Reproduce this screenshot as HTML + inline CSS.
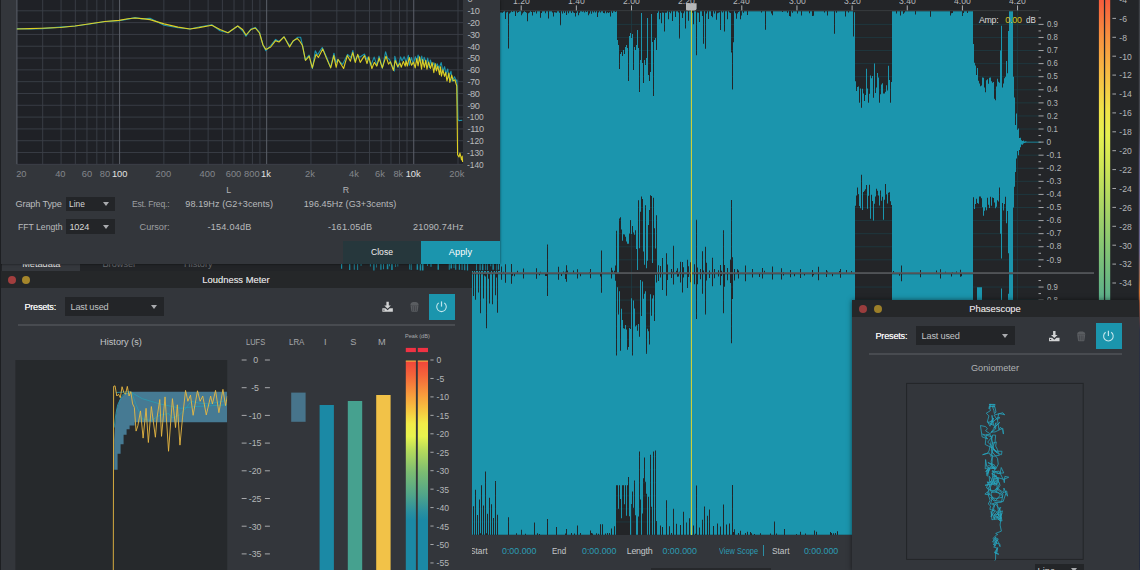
<!DOCTYPE html>
<html lang="en">
<head>
<meta charset="utf-8">
<title>Acoustica – Analysis</title>
<style>
html,body{margin:0;padding:0;overflow:hidden;}
body{width:1140px;height:570px;overflow:hidden;background:#232528;position:relative;
 font-family:"Liberation Sans",sans-serif;font-size:9.2px;color:#c4c6c8;}
.abs{position:absolute;}
.t{position:absolute;white-space:nowrap;line-height:12px;}
svg{position:absolute;left:0;top:0;overflow:hidden;}
.win{position:absolute;background:#33363b;overflow:hidden;}
.titlebar{position:absolute;left:0;right:0;top:0;background:#252729;}
.dot{position:absolute;border-radius:50%;}
.dd{position:absolute;background:#232528;}
.arrow{position:absolute;width:0;height:0;border-left:3.7px solid transparent;border-right:3.7px solid transparent;border-top:4.3px solid #a9abae;}
.btn{position:absolute;}
</style>
</head>
<body>

<div id="waveview" class="abs" style="left:0;top:0;width:1140px;height:570px;">
<svg width="1140" height="570" viewBox="0 0 1140 570">
<rect x="0" y="0" width="1140" height="570" fill="#232528"/>
<path d="M471,259.82H1039M471,246.74H1039M471,233.66H1039M471,220.58H1039M471,207.5H1039M471,194.42H1039M471,181.34H1039M471,168.26H1039M471,155.18H1039M471,142.1H1039M471,129.02H1039M471,115.94H1039M471,102.86H1039M471,89.78H1039M471,76.7H1039M471,63.62H1039M471,50.54H1039M471,37.46H1039M471,24.38H1039M471,521.95H1039M471,508.9H1039M471,495.85H1039M471,482.8H1039M471,469.75H1039M471,456.7H1039M471,443.65H1039M471,430.6H1039M471,417.55H1039M471,404.5H1039M471,391.45H1039M471,378.4H1039M471,365.35H1039M471,352.3H1039M471,339.25H1039M471,326.2H1039M471,313.15H1039M471,300.1H1039M471,287.05H1039M521.2,11V535M576.35,11V535M631.5,11V535M686.65,11V535M741.8,11V535M796.95,11V535M852.1,11V535M907.25,11V535M962.4,11V535M1017.55,11V535" stroke="#1d3b43" stroke-width="0.8" fill="none"/>
<path d="M471,11.3V11.3H472V12.46H473V15.63H474V12.83H475V11.3H476V11.3H477V12.17H478V14.08H479V12.34H480V11.3H481V11.3H482V12.87H483V11.3H484V11.3H485V11.3H486V11.3H487V13.11H488V11.3H489V11.3H490V11.3H491V11.3H492V12.02H493V12.77H494V11.3H495V11.3H496V11.3H497V11.3H498V11.3H499V13.26H500V12.46H501V12.57H502V12.76H503V11.8H504V11.3H505V18.95H506V12.42H507V11.85H508V48.43H509V13.45H510V12.41H511V11.3H512V11.92H513V11.3H514V11.3H515V16.04H516V11.3H517V12.7H518V12.1H519V11.3H520V11.3H521V15.24H522V13.52H523V12.34H524V11.3H525V11.92H526V12.66H527V21.24H528V13.35H529V12.6H530V11.3H531V12H532V15.58H533V11.86H534V12.2H535V11.3H536V13.4H537V11.3H538V11.3H539V11.3H540V17.75H541V13.01H542V11.3H543V11.3H544V11.3H545V13.16H546V11.3H547V11.3H548V18.5H549V11.3H550V11.3H551V11.3H552V12.62H553V16.4H554V12.15H555V12.38H556V12.66H557V11.3H558V11.3H559V12.78H560V25.36H561V11.3H562V13.52H563V11.3H564V12.92H565V11.3H566V15.12H567V11.3H568V13.27H569V11.3H570V11.3H571V13.03H572V11.3H573V12.48H574V12.99H575V16.39H576V12.94H577V11.3H578V15.29H579V12.69H580V11.3H581V11.3H582V11.83H583V11.3H584V12.52H585V11.3H586V11.88H587V11.3H588V15.24H589V13.46H590V11.3H591V13.83H592V11.3H593V12.45H594V11.3H595V12.54H596V11.3H597V16.97H598V12.6H599V11.3H600V12.41H601V11.3H602V11.3H603V13.12H604V13.32H605V11.3H606V13.14H607V12.26H608V13.11H609V12.19H610V16.52H611V11.3H612V13.03H613V11.3H614V11.3H615V11.9H616V11.2H617V40H618V45H619V69H620V54H621V52H622V56H623V50H624V54H625V47H626V45H627V48H628V81H629V36H630V33H631V38H632V34H633V70H634V47H635V50H636V45H637V30H638V48H639V92H640V60H641V13H642V63H643V83H644V60H645V65H646V58H647V18H648V75H649V81H650V72H651V14H652V42H653V96H654V40H655V38H656V50H657V13.1H658V11.3H659V19.2H660V12.88H661V23.14H662V12.48H663V12.84H664V31.44H665V12.7H666V12.83H667V11.3H668V19.22H669V11.84H670V13.2H671V11.3H672V21.04H673V11.3H674V11.3H675V16.99H676V11.3H677V11.3H678V12.47H679V38.53H680V11.3H681V12.79H682V17.99H683V13.21H684V11.3H685V28.44H686V11.3H687V11.3H688V20.66H689V11.3H690V11.3H691V11.3H692V12.83H693V24.13H694V11.3H695V11.3H696V55.18H697V12.44H698V12.77H699V21.89H700V11.3H701V11.3H702V15.9H703V43.69H704V11.3H705V48.78H706V13.38H707V11.3H708V18.93H709V11.3H710V11.3H711V15.94H712V17.23H713V11.3H714V13.56H715V11.3H716V19.74H717V13.26H718V12.85H719V12.18H720V30.05H721V11.3H722V12.61H723V11.3H724V31.44H725V11.3H726V11.3H727V19.25H728V11.3H729V12.4H730V13H731V52.46H732V89.46H733V42.25H734V11.3H735V13.25H736V18.82H737V13.58H738V12.12H739V11.3H740V19.28H741V15.61H742V11.3H743V12.66H744V11.3H745V11.3H746V11.3H747V15.07H748V11.3H749V11.3H750V11.3H751V11.3H752V11.3H753V11.3H754V11.3H755V11.3H756V11.3H757V11.3H758V11.3H759V11.3H760V11.3H761V12.55H762V11.3H763V11.3H764V11.3H765V29.73H766V11.3H767V11.3H768V11.3H769V11.3H770V11.3H771V13.58H772V15.2H773V11.3H774V11.3H775V11.3H776V11.3H777V11.3H778V11.3H779V11.3H780V11.3H781V11.3H782V12.1H783V11.3H784V11.3H785V11.3H786V11.3H787V12.69H788V11.3H789V15.97H790V16.41H791V11.3H792V12.75H793V11.3H794V11.3H795V11.3H796V11.3H797V13.48H798V11.3H799V11.3H800V11.3H801V15.4H802V11.3H803V11.3H804V11.3H805V11.3H806V11.3H807V11.3H808V11.3H809V13.32H810V11.3H811V11.3H812V15.9H813V15.77H814V11.3H815V11.3H816V11.3H817V11.3H818V11.3H819V11.3H820V11.3H821V11.3H822V11.3H823V11.3H824V12.5H825V11.3H826V11.3H827V15.43H828V11.3H829V11.3H830V11.3H831V11.3H832V11.3H833V11.3H834V33.67H835V11.3H836V12.85H837V11.3H838V11.3H839V11.3H840V11.3H841V11.3H842V11.3H843V11.3H844V11.3H845V16.45H846V11.3H847V11.3H848V12.52H849V11.3H850V11.3H851V11.3H852V11.3H853V36.46H854V12.13H855V81.19H856V91H857V87.06H858V86.53H859V102.86H860V88.6H861V107.69H862V88.75H863V93.47H864V100.93H865V94.91H866V68.8H867V88.62H868V102.86H869V93.7H870V75.48H871V78.34H872V75.96H873V97.66H874V63.62H875V93.11H876V87.48H877V73.05H878V77.5H879V102.86H880V94.28H881V84.42H882V83.13H883V93.4H884V93.39H885V91.75H886V85.2H887V90.42H888V65.73H889V80.07H890V102.86H891V82.08H892V11.3H893V11.3H894V11.3H895V11.3H896V13.57H897V11.3H898V11.3H899V11.3H900V15.58H901V11.3H902V11.3H903V13.8H904V12.5H905V11.3H906V11.3H907V11.3H908V11.3H909V11.3H910V11.3H911V11.3H912V11.3H913V11.3H914V11.3H915V14.39H916V11.3H917V11.3H918V11.3H919V11.3H920V11.3H921V11.3H922V11.3H923V11.3H924V11.3H925V11.3H926V11.3H927V11.3H928V11.3H929V11.3H930V16.69H931V11.3H932V11.3H933V11.3H934V11.3H935V11.3H936V11.3H937V11.3H938V11.3H939V11.3H940V11.3H941V11.3H942V11.3H943V11.3H944V11.3H945V11.3H946V11.3H947V11.3H948V11.3H949V11.3H950V15.59H951V13.18H952V13.06H953V11.3H954V11.3H955V11.3H956V11.3H957V11.3H958V11.3H959V11.3H960V11.3H961V11.3H962V15.92H963V12.96H964V11.3H965V11.3H966V11.3H967V12.93H968V11.3H969V11.3H970V11.3H971V11.3H972V11.3H973V43.94H974V62.82H975V65.38H976V75.01H977V67.95H978V80.84H979V83.49H980V86.32H981V85.42H982V77.49H983V77.72H984V87.49H985V92.24H986V80.2H987V79.33H988V83.86H989V77.65H990V77.47H991V81.27H992V82.65H993V81.91H994V98.86H995V100.3H996V86.56H997V78.72H998V81.78H999V82.83H1000V50.54H1001V25.69H1002V87.62H1003V83.38H1004V78.13H1005V76.77H1006V61H1007V73.33H1008V30.92H1009V11.3H1010V11.3H1011V11.3H1012V11.3H1013V76.65H1014V97.55H1015V125.07H1016V113.56H1017V129.79H1018V128.47H1019V138.09H1020V137.86H1021V140.26H1022V140.9H1023V140.4H1024V141.38H1025V141.18H1026V141.58H1027V141.71H1028V141.71H1029V141.71H1030V141.71H1031V141.71H1032V141.71H1033V141.71H1034V141.71H1035V141.71H1036V141.71H1037V141.71H1038V141.71H1039V141.71H1040V141.71H1041V142.49H1040V142.49H1039V142.49H1038V142.49H1037V142.49H1036V142.49H1035V142.49H1034V142.49H1033V142.49H1032V142.49H1031V142.49H1030V142.49H1029V142.49H1028V142.49H1027V142.55H1026V142.75H1025V143.04H1024V143.58H1023V144.73H1022V144.39H1021V147.29H1020V150.07H1019V155.32H1018V150.94H1017V158.53H1016V172H1015V186.65H1014V207.55H1013V272.9H1012V272.9H1011V272.9H1010V272.9H1009V253.28H1008V211.1H1007V223.2H1006V196.75H1005V203.9H1004V210.49H1003V202.94H1002V258.51H1001V233.66H1000V187.55H999V201.52H998V200.23H997V206.68H996V208.19H995V202.53H994V198.06H993V197.44H992V205.79H991V196.66H990V208.04H989V204.86H988V197.71H987V210.34H986V207.3H985V210.73H984V215.84H983V207.23H982V198.14H981V196.38H980V196.59H979V203.78H978V202.91H977V198.76H976V203.89H975V208.91H974V197.19H973V272.9H972V272.9H971V272.9H970V272.9H969V272.9H968V272.9H967V272.9H966V272.9H965V272.9H964V272.9H963V272.9H962V272.9H961V269.77H960V272.9H959V272.9H958V272.9H957V271.52H956V272.9H955V272.9H954V272.9H953V271.95H952V272.9H951V272.9H950V272.9H949V272.9H948V272.9H947V272.9H946V271.87H945V272.9H944V272.9H943V272.9H942V272.9H941V269.15H940V272.9H939V272.9H938V272.9H937V270.56H936V272.9H935V272.9H934V272.9H933V272.9H932V272.9H931V272.9H930V272.9H929V272.9H928V272.9H927V272.9H926V272.9H925V272.9H924V272.9H923V272.9H922V272.9H921V270H920V272.9H919V272.9H918V272.9H917V272.9H916V272.9H915V272.9H914V272.9H913V272.9H912V272.9H911V272.9H910V272.9H909V272.9H908V272.9H907V272.9H906V272.9H905V272.9H904V272.9H903V272.9H902V265.51H901V272.9H900V272.9H899V272.9H898V272.9H897V272.9H896V272.9H895V272.9H894V271.04H893V272.9H892V204.89H891V201.16H890V192.22H889V192.77H888V203.61H887V194.14H886V183.9H885V199.79H884V219.8H883V196.74H882V200.75H881V190.61H880V205.61H879V195.45H878V190.86H877V188.87H876V196.55H875V203.67H874V220.58H873V201.08H872V194.74H871V218.78H870V184.86H869V195.7H868V208.76H867V184.88H866V189.37H865V190.85H864V191.91H863V210.07H862V174.8H861V208.29H860V205.9H859V194.03H858V187.41H857V195.44H856V205.76H855V272.9H854V272.9H853V272.9H852V270.9H851V272.9H850V272.9H849V272.9H848V272.9H847V269.99H846V272.9H845V272.9H844V272.9H843V272.9H842V272.9H841V269.02H840V271.11H839V272.9H838V272.9H837V272.9H836V272.9H835V272.9H834V272.9H833V272.9H832V272.9H831V272.9H830V272.9H829V272.9H828V271.43H827V270.07H826V272.9H825V272.9H824V272.9H823V272.9H822V272.9H821V272.9H820V272.9H819V266.63H818V272.9H817V272.9H816V272.9H815V272.9H814V272.9H813V269.96H812V272.9H811V272.9H810V272.9H809V272.9H808V272.9H807V272.9H806V272.9H805V272.9H804V272.9H803V272.9H802V272.9H801V268.96H800V272.9H799V272.9H798V272.9H797V272.9H796V272.9H795V272.9H794V272.9H793V272.9H792V272.9H791V269.95H790V272.9H789V272.9H788V272.9H787V272.9H786V272.9H785V272.9H784V272.03H783V272.9H782V268.29H781V272.9H780V272.9H779V272.9H778V272.9H777V272.9H776V272.9H775V272.9H774V272.9H773V266.59H772V272.9H771V272.9H770V272.9H769V272.9H768V272.9H767V272.9H766V272.9H765V270.8H764V272.9H763V267.96H762V272.9H761V272.9H760V272.9H759V272.9H758V272.9H757V272.9H756V272.9H755V272.9H754V272.9H753V269.05H752V272.9H751V272.9H750V272.9H749V272.9H748V272.9H747V272.9H746V265.46H745V272.9H744V272.9H743V272.9H742V272.9H741V272.9H740V272.9H739V270.61H738V269.23H737V272.9H736V272.9H735V268.89H734V272.9H733V257.36H732V200.01H731V259.58H730V272.9H729V272.9H728V267.98H727V272.9H726V272.9H725V265.1H724V230.16H723V272.9H722V270.83H721V265.07H720V272.9H719V270.31H718V272.9H717V272.9H716V272.9H715V269.03H714V272.9H713V257.75H712V272.9H711V272.9H710V270.43H709V272.9H708V272.9H707V262.68H706V246.74H705V272.9H704V270.51H703V251.24H702V272.9H701V269.06H700V272.9H699V272.9H698V267.39H697V219.81H696V272.9H695V264.29H694V272.9H693V272.9H692V242.12H691V262.15H690V272.9H689V266.24H688V259.8H687V272.9H686V272.9H685V272.9H684V267.21H683V261.97H682V272.9H681V261.75H680V271.83H679V272.9H678V268.26H677V270.7H676V272.9H675V272.9H674V245.87H673V271.66H672V268.91H671V272.9H670V272.9H669V272.9H668V264.57H667V253.19H666V272.9H665V272.9H664V272.9H663V258.02H662V272.9H661V266.01H660V272.9H659V265.3H658V272.9H657V215.2H656V248.39H655V228.27H654V197.78H653V263.02H652V196.09H651V195.15H650V209.88H649V225.06H648V260.75H647V268.13H646V205.15H645V264.79H644V251.59H643V198.95H642V196.56H641V211.86H640V248.15H639V200.2H638V269.88H637V248.94H636V230.32H635V234.73H634V232.58H633V225.97H632V234.07H631V220.01H630V233.39H629V243.78H628V243.77H627V241.62H626V236.74H625V234.47H624V234.19H623V240.78H622V229.45H621V217.19H620V218.55H619V272.9H618V272.9H617V230.87H616V265.57H615V270.67H614V272.9H613V270.52H612V267.72H611V272.9H610V272.9H609V272.9H608V272.9H607V272.9H606V272.9H605V272.9H604V272.9H603V272.9H602V250.6H601V272.9H600V272.9H599V272.9H598V272.9H597V272.9H596V272.9H595V272.9H594V272.9H593V272.9H592V272.9H591V268.92H590V272.09H589V272.9H588V272.9H587V272.9H586V272.9H585V272.9H584V272.9H583V272.9H582V272.9H581V272.9H580V272.9H579V272.9H578V269.14H577V272.9H576V272.9H575V272.9H574V270.55H573V272.9H572V272.9H571V272.9H570V272.9H569V272.9H568V270.58H567V265.33H566V271.78H565V272.9H564V271.55H563V272.9H562V272.9H561V272.9H560V272.9H559V266.63H558V272.9H557V272.9H556V272.9H555V272.9H554V272.9H553V272.9H552V272.9H551V272.9H550V272.9H549V272.9H548V244.46H547V272.9H546V272.9H545V272.9H544V272.9H543V272.9H542V272.9H541V271.64H540V272.9H539V272.9H538V272.9H537V268.2H536V272.9H535V272.9H534V272.9H533V272.9H532V272.9H531V272.9H530V272.9H529V272.9H528V272.9H527V272.9H526V272.9H525V272.9H524V268.62H523V272.9H522V272.9H521V272.9H520V272.9H519V272.9H518V270.66H517V272.9H516V272.9H515V272.9H514V272.9H513V272.9H512V264.03H511V272.9H510V272.9H509V272.9H508V272.9H507V272.9H506V264.33H505V272.9H504V271.75H503V272.9H502V266.54H501V272.9H500V272.9H499V272.9H498V234.08H497V272.9H496V248.86H495V272.9H494V271.21H493V236.29H492V272.9H491V270.73H490V246.72H489V272.9H488V272.9H487V213.32H486V272.9H485V272.9H484V243.07H483V272.9H482V272.9H481V234.51H480V272.9H479V254.43H478V272.9H477V272.9H476V244.23H475V272.9H474V252.07H473V272.9H472V272.9H471Z M471,274.2V274.2H472V274.2H473V295.91H474V274.2H475V299.73H476V274.2H477V274.2H478V292.38H479V274.2H480V313.23H481V274.2H482V274.2H483V298.52H484V275.43H485V276.53H486V328.27H487V274.2H488V278.65H489V303.42H490V274.2H491V274.2H492V304.23H493V274.2H494V274.2H495V295.2H496V277.49H497V312.82H498V274.2H499V274.2H500V274.2H501V279.81H502V274.2H503V274.2H504V274.2H505V282.8H506V274.2H507V274.2H508V274.2H509V274.2H510V274.2H511V283.86H512V275.79H513V274.2H514V276.21H515V274.2H516V274.2H517V274.2H518V274.2H519V274.2H520V274.2H521V274.2H522V274.2H523V278.51H524V274.2H525V274.2H526V274.2H527V274.2H528V274.2H529V274.2H530V274.2H531V274.2H532V274.2H533V274.2H534V274.2H535V274.2H536V278.73H537V274.2H538V274.2H539V275.29H540V274.2H541V274.2H542V274.2H543V274.2H544V274.2H545V276.06H546V276.01H547V296.04H548V274.2H549V274.2H550V274.2H551V274.2H552V274.2H553V274.2H554V274.2H555V274.2H556V274.2H557V274.2H558V279.77H559V274.2H560V274.2H561V275.94H562V274.2H563V274.2H564V274.2H565V279H566V281.71H567V274.2H568V274.2H569V274.2H570V274.2H571V274.2H572V274.2H573V274.2H574V274.2H575V274.2H576V274.2H577V278.39H578V274.2H579V274.2H580V276.22H581V274.2H582V274.2H583V274.2H584V274.2H585V274.2H586V274.2H587V274.2H588V274.2H589V274.2H590V278.16H591V274.2H592V274.2H593V274.2H594V274.2H595V274.2H596V274.2H597V274.2H598V274.2H599V274.2H600V276.53H601V292.7H602V274.2H603V274.2H604V274.2H605V274.2H606V274.2H607V274.2H608V274.2H609V274.2H610V274.2H611V278.43H612V274.2H613V274.2H614V274.2H615V280.8H616V355.42H617V287.23H618V314.51H619V291.24H620V350.83H621V308.71H622V320.01H623V328.36H624V328.65H625V325.07H626V329.42H627V349.79H628V346.99H629V327.97H630V329H631V298.34H632V355.56H633V300.45H634V308.61H635V326.59H636V325.24H637V330.68H638V323.98H639V336.64H640V279.96H641V315.89H642V281.42H643V298.77H644V293.68H645V291.14H646V353.86H647V328.73H648V331.35H649V344.51H650V294.32H651V315.75H652V298.6H653V295.36H654V320.93H655V274.74H656V282.57H657V274.2H658V280.92H659V274.2H660V277.52H661V274.2H662V289.91H663V274.2H664V274.2H665V274.2H666V295.82H667V279.95H668V274.2H669V274.2H670V274.2H671V278.12H672V274.2H673V284.5H674V274.2H675V274.2H676V274.2H677V276.69H678V276.51H679V274.2H680V282.55H681V274.2H682V292.56H683V277.46H684V274.2H685V274.2H686V274.2H687V287.88H688V277.08H689V274.2H690V282.3H691V286.39H692V274.2H693V274.2H694V284.3H695V274.2H696V318.99H697V284.13H698V274.2H699V274.2H700V279.14H701V274.2H702V293.71H703V274.2H704V274.2H705V314.38H706V280.61H707V274.2H708V274.2H709V277.97H710V274.2H711V274.2H712V286.32H713V274.2H714V278.15H715V274.2H716V274.2H717V274.2H718V276.62H719V274.2H720V285.23H721V275.93H722V274.2H723V313.18H724V286.66H725V274.2H726V274.2H727V280.33H728V274.2H729V274.2H730V282.9H731V343.2H732V298.93H733V274.2H734V280.45H735V274.2H736V274.2H737V274.2H738V278.55H739V274.2H740V274.2H741V274.2H742V274.2H743V274.2H744V274.2H745V281.16H746V274.2H747V274.2H748V274.2H749V274.2H750V274.2H751V274.2H752V277.56H753V274.2H754V274.2H755V274.2H756V274.2H757V274.2H758V274.2H759V277.08H760V274.2H761V274.2H762V278.52H763V274.2H764V274.2H765V274.2H766V274.2H767V274.2H768V274.2H769V274.2H770V274.2H771V274.2H772V279.39H773V274.2H774V274.2H775V274.2H776V274.2H777V274.2H778V274.2H779V274.2H780V274.2H781V279.61H782V274.2H783V275.44H784V274.2H785V274.2H786V274.2H787V274.2H788V274.2H789V274.2H790V277.23H791V274.2H792V274.2H793V274.2H794V276.3H795V274.2H796V274.2H797V274.2H798V274.2H799V274.2H800V278.04H801V274.2H802V274.2H803V274.2H804V275.41H805V274.2H806V274.2H807V274.2H808V274.2H809V274.2H810V274.2H811V274.2H812V276.63H813V275.18H814V274.2H815V274.2H816V274.2H817V274.2H818V280.34H819V274.2H820V274.2H821V274.2H822V274.2H823V274.2H824V274.2H825V274.2H826V277.08H827V274.2H828V274.2H829V274.2H830V274.2H831V274.2H832V276.26H833V274.2H834V274.2H835V274.2H836V274.2H837V274.2H838V274.2H839V274.2H840V277.77H841V274.2H842V274.2H843V274.2H844V274.2H845V274.2H846V274.2H847V274.2H848V274.2H849V274.2H850V274.2H851V274.2H852V274.2H853V274.2H854V274.2H855V354.55H856V347.31H857V365.91H858V358.51H859V351.12H860V339.44H861V354.94H862V356.64H863V338.18H864V350.46H865V343.63H866V357.32H867V362.57H868V348.58H869V342.12H870V345.24H871V326.35H872V355.44H873V345.32H874V349.19H875V350.16H876V353.06H877V343.88H878V345.75H879V361.11H880V334.35H881V349.68H882V340.69H883V366.64H884V347.3H885V368.33H886V348.58H887V360.97H888V343.02H889V346.02H890V340.69H891V345.85H892V274.2H893V274.2H894V274.2H895V274.2H896V274.2H897V274.2H898V274.2H899V275.87H900V274.2H901V281.19H902V274.2H903V274.2H904V274.2H905V274.2H906V274.2H907V274.2H908V274.2H909V274.2H910V274.2H911V274.2H912V274.2H913V274.2H914V274.2H915V274.2H916V274.2H917V274.2H918V274.2H919V274.2H920V277.3H921V274.2H922V274.2H923V274.2H924V274.2H925V274.2H926V274.2H927V274.2H928V274.2H929V274.2H930V274.2H931V274.2H932V274.2H933V274.2H934V274.2H935V274.2H936V274.2H937V274.2H938V274.2H939V274.2H940V278.49H941V274.2H942V274.2H943V274.2H944V274.2H945V274.2H946V274.2H947V274.2H948V274.2H949V274.2H950V274.2H951V276.38H952V274.2H953V274.2H954V274.2H955V274.2H956V274.2H957V274.2H958V274.2H959V274.2H960V276.68H961V276.29H962V274.2H963V274.2H964V274.2H965V274.2H966V274.2H967V274.2H968V274.2H969V274.2H970V274.2H971V274.2H972V274.2H973V341.85H974V343.39H975V325.09H976V332.32H977V287.23H978V287.23H979V287.23H980V287.23H981V287.23H982V343.27H983V352.35H984V346.52H985V356.28H986V333.38H987V349.27H988V350.6H989V342.7H990V359.37H991V341.29H992V348.58H993V353.05H994V358.67H995V338.33H996V346.9H997V350.98H998V345.78H999V336.61H1000V313.29H1001V288.53H1002V338.36H1003V353.19H1004V348.97H1005V316.9H1006V323.71H1007V349.17H1008V293.75H1009V274.2H1010V274.2H1011V274.2H1012V274.2H1013V339.3H1014V360.12H1015V368.63H1016V387.1H1017V393.56H1018V394.57H1019V398.65H1020V401.28H1021V402.49H1022V402.66H1023V403.56H1024V403.27H1025V403.67H1026V403.97H1027V404.11H1028V404.11H1029V404.11H1030V404.11H1031V404.11H1032V404.11H1033V404.11H1034V404.11H1035V404.11H1036V404.11H1037V404.11H1038V404.11H1039V404.11H1040V404.11H1041V404.89H1040V404.89H1039V404.89H1038V404.89H1037V404.89H1036V404.89H1035V404.89H1034V404.89H1033V404.89H1032V404.89H1031V404.89H1030V404.89H1029V404.89H1028V404.89H1027V405.01H1026V404.91H1025V405.3H1024V405.7H1023V405.63H1022V408.11H1021V409.14H1020V409.25H1019V418.23H1018V423.39H1017V418.3H1016V435.99H1015V448.88H1014V469.7H1013V534.8H1012V534.8H1011V534.8H1010V534.8H1009V515.25H1008V463.64H1007V485.29H1006V456.1H1005V456.65H1004V461.17H1003V474.36H1002V520.47H1001V495.71H1000V473.52H999V462.87H998V464.61H997V460.84H996V465.61H995V473.22H994V463.44H993V472.76H992V469.62H991V463.19H990V471.54H989V458.82H988V462.95H987V461.6H986V456.28H985V469.52H984V461.01H983V457.36H982V521.77H981V521.77H980V521.77H979V521.77H978V521.77H977V476.65H976V458.84H975V484.96H974V470.34H973V534.8H972V534.8H971V534.8H970V534.8H969V534.8H968V534.8H967V534.8H966V534.8H965V534.8H964V534.8H963V534.8H962V534.8H961V531.45H960V534.8H959V534.8H958V534.8H957V534.8H956V534.8H955V534.8H954V534.8H953V533.13H952V534.8H951V534.8H950V534.8H949V534.8H948V534.8H947V534.8H946V534.8H945V534.8H944V534.8H943V534.8H942V534.8H941V534.8H940V534.8H939V534.8H938V534.8H937V534.8H936V534.8H935V534.8H934V534.8H933V534.8H932V534.8H931V534.8H930V534.8H929V534.8H928V534.8H927V534.8H926V534.8H925V534.8H924V534.8H923V534.8H922V534.8H921V534.8H920V533.06H919V534.8H918V534.8H917V534.8H916V534.8H915V533.08H914V534.8H913V534.8H912V534.8H911V534.8H910V534.1H909V534.01H908V534.8H907V534.8H906V534.8H905V534.8H904V534.8H903V534.8H902V534.8H901V534.8H900V534.8H899V534.8H898V534.8H897V534.8H896V534.8H895V534.8H894V534.8H893V533.92H892V461.83H891V468.17H890V463.97H889V464.58H888V468.14H887V456.71H886V471.27H885V452.49H884V443.6H883V458.77H882V454.21H881V447.99H880V459.45H879V454.02H878V442.29H877V457.55H876V470.09H875V461.33H874V455.5H873V450.9H872V467.69H871V464.27H870V441.99H869V455.3H868V453.36H867V448.37H866V467.27H865V454.72H864V462.2H863V469.66H862V462.18H861V455.54H860V462.81H859V441.83H858V453.58H857V462.44H856V462.17H855V534.8H854V534.8H853V534.8H852V534.8H851V534.8H850V534.8H849V534.8H848V534.8H847V534.8H846V534.8H845V534.8H844V534.8H843V534.8H842V534.8H841V534.8H840V534.8H839V534.8H838V531.26H837V534.8H836V532.89H835V534.8H834V533.36H833V534.8H832V533H831V531.95H830V534.8H829V534.8H828V534.8H827V534.8H826V534.8H825V534.8H824V534.8H823V534.8H822V534.8H821V534.8H820V534.8H819V534.8H818V534.8H817V531.7H816V534.8H815V530.61H814V534.8H813V534.8H812V534.8H811V534.8H810V534.8H809V534.8H808V534.8H807V534.8H806V533.38H805V534.8H804V534.8H803V534.8H802V534.8H801V531.66H800V534.8H799V534.8H798V534.8H797V534.11H796V534.8H795V534.8H794V534.8H793V534.8H792V534.8H791V534.8H790V534.8H789V534.8H788V534.8H787V534.8H786V534.8H785V528.99H784V534.8H783V534.8H782V534.8H781V534.8H780V534.8H779V534.8H778V534.8H777V533.56H776V534.8H775V521.62H774V534.8H773V534.8H772V534.8H771V533.5H770V534.8H769V534.8H768V534.8H767V534.8H766V534.8H765V534.8H764V534.8H763V534.8H762V534.8H761V533.14H760V534.8H759V534.8H758V534.8H757V534.8H756V534.8H755V534.1H754V534.8H753V534.8H752V533.13H751V531.93H750V534.8H749V534.8H748V531.72H747V534.8H746V533.01H745V534.8H744V534.8H743V534.8H742V534.8H741V530.77H740V534.8H739V533.03H738V534.8H737V534.8H736V534.8H735V529.22H734V532.09H733V485.03H732V534.8H731V534.8H730V523.44H729V534.8H728V534.8H727V524.46H726V534.8H725V534.8H724V504.47H723V534.8H722V534.8H721V526.43H720V534.8H719V534.8H718V523.52H717V534.8H716V534.8H715V534.8H714V526.09H713V534.8H712V534.8H711V534.8H710V509.56H709V534.8H708V515.74H707V534.8H706V534.8H705V506.58H704V534.8H703V519.79H702V534.8H701V534.8H700V527.45H699V534.8H698V534.8H697V485.39H696V533.83H695V534.8H694V525.45H693V534.8H692V507.26H691V534.8H690V518.25H689V534.8H688V534.8H687V522.56H686V534.8H685V534.8H684V511.74H683V534.8H682V534.8H681V525.05H680V534.8H679V534.8H678V534.8H677V523.71H676V534.8H675V534.8H674V508.63H673V534.8H672V533H671V534.8H670V526.3H669V534.8H668V534.8H667V500.19H666V534.8H665V534.8H664V534.8H663V527.04H662V534.8H661V525.38H660V534.8H659V534.8H658V534.8H657V521.04H656V450.45H655V534.8H654V451.41H653V534.8H652V506.82H651V454.65H650V534.8H649V496.85H648V534.8H647V493.74H646V481.74H645V457.43H644V478.3H643V513.41H642V534.8H641V499.46H640V451.41H639V516.54H638V534.8H637V534.8H636V515.33H635V480.4H634V507.8H633V491.54H632V504.06H631V534.8H630V516.23H629V476.91H628V485.29H627V515.76H626V485.29H625V504.16H624V485.29H623V485.29H622V518.2H621V498.95H620V485.29H619V508.73H618V485.29H617V485.29H616V534.8H615V526.37H614V534.8H613V534.8H612V528.55H611V534.8H610V533H609V534.8H608V532.88H607V534.8H606V533.6H605V534.8H604V534.8H603V524.26H602V534.8H601V524.27H600V534.8H599V533.74H598V534.8H597V533.21H596V534.8H595V534.8H594V534.8H593V533.54H592V533.08H591V530.57H590V534.8H589V534.8H588V534.8H587V534.8H586V534.8H585V534.8H584V534.8H583V534.8H582V534.8H581V533.08H580V534.8H579V534.8H578V525.44H577V534.8H576V534.8H575V533.56H574V534.8H573V534.8H572V532.93H571V534.8H570V534.8H569V534.8H568V534.8H567V529.12H566V533.53H565V534.8H564V534.8H563V534.8H562V534.8H561V534.8H560V534.8H559V534.8H558V534.8H557V527.04H556V534.8H555V534.8H554V534.8H553V534.8H552V534.8H551V534.8H550V534.8H549V534.8H548V518.88H547V534.8H546V534.8H545V534.8H544V534.8H543V534.8H542V534.8H541V534.8H540V533.9H539V534.8H538V533.33H537V534.8H536V534.8H535V522.43H534V534.8H533V534.8H532V534.8H531V534.8H530V534.8H529V534.8H528V534.8H527V534.8H526V533.81H525V534.8H524V534.8H523V534.8H522V529.64H521V534.8H520V534.8H519V534.8H518V534.8H517V533.3H516V534.8H515V534.8H514V534.8H513V534.8H512V534.8H511V534.8H510V534.8H509V517.13H508V534.8H507V534.8H506V534.8H505V534.8H504V534.8H503V534.8H502V534.8H501V534.8H500V534.8H499V534.8H498V514.78H497V534.8H496V480.94H495V534.8H494V518.09H493V534.8H492V504.21H491V534.8H490V497.68H489V534.8H488V513.73H487V533.34H486V471.62H485V534.8H484V505.56H483V534.8H482V485.21H481V533.17H480V499.54H479V534.8H478V515.07H477V534.8H476V489.8H475V534.8H474V506.23H473V534.8H472V534.8H471Z" fill="#1b95ad"/>
<rect x="499.5" y="11" width="1.2" height="524" fill="#167d92" opacity="0.0"/>
<rect x="471" y="272.2" width="623" height="1.7" fill="#56595c"/>
<rect x="471" y="0" width="570" height="10.3" fill="#232528"/>
<rect x="471" y="10.2" width="568" height="0.9" fill="#3a3d41"/>
<path d="M521.2,5.4V10.4M576.35,5.4V10.4M631.5,5.4V10.4M686.65,5.4V10.4M741.8,5.4V10.4M796.95,5.4V10.4M852.1,5.4V10.4M907.25,5.4V10.4M962.4,5.4V10.4M1017.55,5.4V10.4" stroke="#aeb0b2" stroke-width="1" fill="none"/>
<rect x="690.9" y="10" width="1.1" height="525" fill="#c9cf3c"/>
<path d="M686,3.2H696.6V8.2Q696.6,10.6 693.6,10.6H689Q686,10.6 686,8.2Z" fill="#b6b7b8"/>
<path d="M1038.5,259.82H1043.6M1038.5,253.28H1041M1038.5,246.74H1043.6M1038.5,240.2H1041M1038.5,233.66H1043.6M1038.5,227.12H1041M1038.5,220.58H1043.6M1038.5,214.04H1041M1038.5,207.5H1043.6M1038.5,200.96H1041M1038.5,194.42H1043.6M1038.5,187.88H1041M1038.5,181.34H1043.6M1038.5,174.8H1041M1038.5,168.26H1043.6M1038.5,161.72H1041M1038.5,155.18H1043.6M1038.5,148.64H1041M1038.5,142.1H1043.6M1038.5,135.56H1041M1038.5,129.02H1043.6M1038.5,122.48H1041M1038.5,115.94H1043.6M1038.5,109.4H1041M1038.5,102.86H1043.6M1038.5,96.32H1041M1038.5,89.78H1043.6M1038.5,83.24H1041M1038.5,76.7H1043.6M1038.5,70.16H1041M1038.5,63.62H1043.6M1038.5,57.08H1041M1038.5,50.54H1043.6M1038.5,44H1041M1038.5,37.46H1043.6M1038.5,30.92H1041M1038.5,24.38H1043.6M1038.5,17.84H1041M1038.5,266.36H1041M1038.5,521.95H1043.6M1038.5,515.43H1041M1038.5,508.9H1043.6M1038.5,502.38H1041M1038.5,495.85H1043.6M1038.5,489.33H1041M1038.5,482.8H1043.6M1038.5,476.28H1041M1038.5,469.75H1043.6M1038.5,463.23H1041M1038.5,456.7H1043.6M1038.5,450.18H1041M1038.5,443.65H1043.6M1038.5,437.12H1041M1038.5,430.6H1043.6M1038.5,424.08H1041M1038.5,417.55H1043.6M1038.5,411.03H1041M1038.5,404.5H1043.6M1038.5,397.98H1041M1038.5,391.45H1043.6M1038.5,384.93H1041M1038.5,378.4H1043.6M1038.5,371.88H1041M1038.5,365.35H1043.6M1038.5,358.83H1041M1038.5,352.3H1043.6M1038.5,345.78H1041M1038.5,339.25H1043.6M1038.5,332.73H1041M1038.5,326.2H1043.6M1038.5,319.68H1041M1038.5,313.15H1043.6M1038.5,306.62H1041M1038.5,300.1H1043.6M1038.5,293.58H1041M1038.5,287.05H1043.6M1038.5,280.53H1041M1038.5,528.48H1041" stroke="#b4b6b8" stroke-width="0.9" fill="none"/>
<defs><linearGradient id="mg" x1="0" y1="0" x2="0" y2="1">
<stop offset="0" stop-color="#f85c3c"/><stop offset="0.12" stop-color="#f8903f"/><stop offset="0.235" stop-color="#f6b843"/>
<stop offset="0.37" stop-color="#f0e448"/><stop offset="0.45" stop-color="#e6f050"/><stop offset="0.55" stop-color="#cfe655"/>
<stop offset="0.68" stop-color="#acd663"/><stop offset="0.82" stop-color="#86c673"/><stop offset="1" stop-color="#5aae8a"/>
</linearGradient></defs>
<rect x="1098.9" y="0" width="5" height="300" fill="url(#mg)"/>
<rect x="1105.2" y="0" width="5" height="300" fill="url(#mg)"/>
<path d="M1112.4,-0.5H1116M1112.4,18.4H1116M1112.4,37.3H1116M1112.4,56.2H1116M1112.4,75.1H1116M1112.4,94H1116M1112.4,112.9H1116M1112.4,131.8H1116M1112.4,150.7H1116M1112.4,169.6H1116M1112.4,188.5H1116M1112.4,207.4H1116M1112.4,226.3H1116M1112.4,245.2H1116M1112.4,264.1H1116M1112.4,283H1116M1112.4,301.9H1116" stroke="#b4b6b8" stroke-width="0.9" fill="none"/>
<defs><linearGradient id="dg" x1="0" y1="0" x2="0" y2="1">
<stop offset="0" stop-color="#3d4045"/><stop offset="0.23" stop-color="#44464e"/><stop offset="0.28" stop-color="#5a5880"/>
<stop offset="0.44" stop-color="#6a6590"/><stop offset="0.49" stop-color="#a06848"/><stop offset="0.512" stop-color="#d07030"/>
<stop offset="0.54" stop-color="#a05a48"/><stop offset="0.58" stop-color="#3a3f58"/><stop offset="1" stop-color="#2c3650"/></linearGradient></defs>
<rect x="1138.8" y="0" width="1.2" height="570" fill="url(#dg)"/>
</svg>
<span class="t" style="left:512.8px;top:-5.3px;font-size:9.2px;color:#b8babc;transform-origin:0 50%;transform:scaleX(0.938);">1:20</span>
<span class="t" style="left:567.95px;top:-5.3px;font-size:9.2px;color:#b8babc;transform-origin:0 50%;transform:scaleX(0.938);">1:40</span>
<span class="t" style="left:623.1px;top:-5.3px;font-size:9.2px;color:#b8babc;transform-origin:0 50%;transform:scaleX(0.938);">2:00</span>
<span class="t" style="left:678.25px;top:-5.3px;font-size:9.2px;color:#b8babc;transform-origin:0 50%;transform:scaleX(0.938);">2:20</span>
<span class="t" style="left:733.4px;top:-5.3px;font-size:9.2px;color:#b8babc;transform-origin:0 50%;transform:scaleX(0.938);">2:40</span>
<span class="t" style="left:788.55px;top:-5.3px;font-size:9.2px;color:#b8babc;transform-origin:0 50%;transform:scaleX(0.938);">3:00</span>
<span class="t" style="left:843.7px;top:-5.3px;font-size:9.2px;color:#b8babc;transform-origin:0 50%;transform:scaleX(0.938);">3:20</span>
<span class="t" style="left:898.85px;top:-5.3px;font-size:9.2px;color:#b8babc;transform-origin:0 50%;transform:scaleX(0.938);">3:40</span>
<span class="t" style="left:954px;top:-5.3px;font-size:9.2px;color:#b8babc;transform-origin:0 50%;transform:scaleX(0.938);">4:00</span>
<span class="t" style="left:1009.15px;top:-5.3px;font-size:9.2px;color:#b8babc;transform-origin:0 50%;transform:scaleX(0.938);">4:20</span>
<span class="t" style="left:1046.6px;top:18.08px;font-size:8.3px;color:#b4b6b8;transform-origin:0 50%;transform:scaleX(0.936);">0.9</span>
<span class="t" style="left:1046.6px;top:31.16px;font-size:8.3px;color:#b4b6b8;transform-origin:0 50%;transform:scaleX(0.936);">0.8</span>
<span class="t" style="left:1046.6px;top:44.24px;font-size:8.3px;color:#b4b6b8;transform-origin:0 50%;transform:scaleX(0.936);">0.7</span>
<span class="t" style="left:1046.6px;top:57.32px;font-size:8.3px;color:#b4b6b8;transform-origin:0 50%;transform:scaleX(0.936);">0.6</span>
<span class="t" style="left:1046.6px;top:70.4px;font-size:8.3px;color:#b4b6b8;transform-origin:0 50%;transform:scaleX(0.936);">0.5</span>
<span class="t" style="left:1046.6px;top:83.48px;font-size:8.3px;color:#b4b6b8;transform-origin:0 50%;transform:scaleX(0.936);">0.4</span>
<span class="t" style="left:1046.6px;top:96.56px;font-size:8.3px;color:#b4b6b8;transform-origin:0 50%;transform:scaleX(0.936);">0.3</span>
<span class="t" style="left:1046.6px;top:109.64px;font-size:8.3px;color:#b4b6b8;transform-origin:0 50%;transform:scaleX(0.936);">0.2</span>
<span class="t" style="left:1046.6px;top:122.72px;font-size:8.3px;color:#b4b6b8;transform-origin:0 50%;transform:scaleX(0.936);">0.1</span>
<span class="t" style="left:1046.6px;top:135.8px;font-size:8.3px;color:#b4b6b8;">0</span>
<span class="t" style="left:1046.6px;top:148.88px;font-size:8.3px;color:#b4b6b8;letter-spacing:0.13px;">-0.1</span>
<span class="t" style="left:1046.6px;top:161.96px;font-size:8.3px;color:#b4b6b8;letter-spacing:0.13px;">-0.2</span>
<span class="t" style="left:1046.6px;top:175.04px;font-size:8.3px;color:#b4b6b8;letter-spacing:0.13px;">-0.3</span>
<span class="t" style="left:1046.6px;top:188.12px;font-size:8.3px;color:#b4b6b8;letter-spacing:0.13px;">-0.4</span>
<span class="t" style="left:1046.6px;top:201.2px;font-size:8.3px;color:#b4b6b8;letter-spacing:0.13px;">-0.5</span>
<span class="t" style="left:1046.6px;top:214.28px;font-size:8.3px;color:#b4b6b8;letter-spacing:0.13px;">-0.6</span>
<span class="t" style="left:1046.6px;top:227.36px;font-size:8.3px;color:#b4b6b8;letter-spacing:0.13px;">-0.7</span>
<span class="t" style="left:1046.6px;top:240.44px;font-size:8.3px;color:#b4b6b8;letter-spacing:0.13px;">-0.8</span>
<span class="t" style="left:1046.6px;top:253.52px;font-size:8.3px;color:#b4b6b8;letter-spacing:0.13px;">-0.9</span>
<span class="t" style="left:1046.6px;top:281.25px;font-size:8.3px;color:#b4b6b8;transform-origin:0 50%;transform:scaleX(0.936);">0.9</span>
<span class="t" style="left:1046.6px;top:294.3px;font-size:8.3px;color:#b4b6b8;transform-origin:0 50%;transform:scaleX(0.936);">0.8</span>
<span class="t" style="left:979px;top:13.9px;font-size:8.8px;color:#dcdcdc;letter-spacing:-0.31px;">Amp:</span>
<span class="t" style="left:1005.2px;top:13.9px;font-size:8.8px;color:#d8c222;letter-spacing:-0.11px;">0.00</span>
<span class="t" style="left:1026.3px;top:13.9px;font-size:8.8px;color:#dcdcdc;transform-origin:0 50%;transform:scaleX(0.910);">dB</span>
<span class="t" style="left:1119.3px;top:-6.2px;font-size:8.6px;color:#b4b6b8;">-4</span>
<span class="t" style="left:1119.3px;top:12.7px;font-size:8.6px;color:#b4b6b8;">-6</span>
<span class="t" style="left:1119.3px;top:31.6px;font-size:8.6px;color:#b4b6b8;">-8</span>
<span class="t" style="left:1119.3px;top:50.5px;font-size:8.6px;color:#b4b6b8;">-10</span>
<span class="t" style="left:1119.3px;top:69.4px;font-size:8.6px;color:#b4b6b8;">-12</span>
<span class="t" style="left:1119.3px;top:88.3px;font-size:8.6px;color:#b4b6b8;">-14</span>
<span class="t" style="left:1119.3px;top:107.2px;font-size:8.6px;color:#b4b6b8;">-16</span>
<span class="t" style="left:1119.3px;top:126.1px;font-size:8.6px;color:#b4b6b8;">-18</span>
<span class="t" style="left:1119.3px;top:145px;font-size:8.6px;color:#b4b6b8;">-20</span>
<span class="t" style="left:1119.3px;top:163.9px;font-size:8.6px;color:#b4b6b8;">-22</span>
<span class="t" style="left:1119.3px;top:182.8px;font-size:8.6px;color:#b4b6b8;">-24</span>
<span class="t" style="left:1119.3px;top:201.7px;font-size:8.6px;color:#b4b6b8;">-26</span>
<span class="t" style="left:1119.3px;top:220.6px;font-size:8.6px;color:#b4b6b8;">-28</span>
<span class="t" style="left:1119.3px;top:239.5px;font-size:8.6px;color:#b4b6b8;">-30</span>
<span class="t" style="left:1119.3px;top:258.4px;font-size:8.6px;color:#b4b6b8;">-32</span>
<span class="t" style="left:1119.3px;top:277.3px;font-size:8.6px;color:#b4b6b8;">-34</span>
</div>
<div id="statusbar" class="abs" style="left:471px;top:534.8px;width:382px;height:36px;background:#33363b;">
<span class="t" style="left:-0.6px;top:10.2px;font-size:8.9px;color:#c4c6c8;transform-origin:0 50%;transform:scaleX(0.936);">Start</span>
<span class="t" style="left:31px;top:10.2px;font-size:8.9px;color:#2b9cb4;letter-spacing:-0.02px;">0:00.000</span>
<span class="t" style="left:81.3px;top:10.2px;font-size:8.9px;color:#c4c6c8;transform-origin:0 50%;transform:scaleX(0.897);">End</span>
<span class="t" style="left:111px;top:10.2px;font-size:8.9px;color:#2b9cb4;letter-spacing:-0.02px;">0:00.000</span>
<span class="t" style="left:155.7px;top:10.2px;font-size:8.9px;color:#c4c6c8;letter-spacing:-0.24px;">Length</span>
<span class="t" style="left:191.5px;top:10.2px;font-size:8.9px;color:#2b9cb4;letter-spacing:-0.02px;">0:00.000</span>
<span class="t" style="left:248px;top:10.2px;font-size:8.9px;color:#2b9cb4;transform-origin:0 50%;transform:scaleX(0.837);">View Scope</span>
<span class="t" style="left:301.3px;top:10.2px;font-size:8.9px;color:#c4c6c8;transform-origin:0 50%;transform:scaleX(0.936);">Start</span>
<span class="t" style="left:332.9px;top:10.2px;font-size:8.9px;color:#2b9cb4;letter-spacing:-0.02px;">0:00.000</span>
<div class="abs" style="left:292.3px;top:10.4px;width:1px;height:11px;background:#2b8ea4;"></div>
<div class="abs" style="left:179.5px;top:33.6px;width:120px;height:2px;background:#26282b;"></div>
</div>
<div id="tabs" class="abs" style="left:0;top:255px;width:500px;height:16.3px;background:#222427;overflow:hidden;">
<div class="abs" style="left:1.5px;top:0;width:78.5px;height:15.8px;background:#35383d;"></div>
<span class="t" style="left:41.3px;top:2.8px;font-size:9.2px;color:#e8e8e8;transform:translateX(-50%);">Metadata</span>
<span class="t" style="left:119.3px;top:2.8px;font-size:9.2px;color:#65686d;transform:translateX(-50%);">Browser</span>
<span class="t" style="left:198.3px;top:2.8px;font-size:9.2px;color:#65686d;transform:translateX(-50%);">History</span>
<svg width="500" height="17" viewBox="0 0 500 17"><path d="M341,8.8v4.83h1.2v-4.83zM349.1,8.8v6.15h1.2v-6.15zM353.8,8.8v5.84h0.9v-5.84zM357.2,8.8v6.24h0.9v-6.24zM360.6,8.8v2.02h0.9v-2.02zM369.9,8.8v2.59h0.9v-2.59zM373.3,8.8v6.62h1.2v-6.62zM376.1,8.8v3.76h0.7v-3.76zM380.3,8.8v5.87h1.2v-5.87zM383.1,8.8v5.57h0.9v-5.57zM386.8,8.8v5.51h1.5v-5.51zM389.1,8.8v2.36h0.9v-2.36zM391.2,8.8v6.13h1.5v-6.13zM395.2,8.8v3.1h0.7v-3.1zM397.5,8.8v2.63h0.7v-2.63zM409.2,8.8v5.71h0.7v-5.71zM410.7,8.8v6.08h0.9v-6.08zM416.6,8.8v5.91h1.5v-5.91zM419.7,8.8v6.67h1.5v-6.67zM422,8.8v6.68h1.5v-6.68zM427,8.8v2.32h0.9v-2.32zM430.4,8.8v2.88h1.2v-2.88zM437.5,8.8v5.83h1.5v-5.83zM448.8,8.8v5.91h0.9v-5.91zM450.5,8.8v4.6h1.5v-4.6zM453.6,8.8v4.08h0.7v-4.08zM455.1,8.8v5.84h1.2v-5.84zM458.8,8.8v5.85h1.2v-5.85zM461.6,8.8v6.16h0.9v-6.16zM464.1,8.8v6.48h1.2v-6.48zM466.9,8.8v6.63h1.2v-6.63zM476.1,8.8v6.5h0.9v-6.5zM479.5,8.8v6.38h1.2v-6.38zM481.9,8.8v6.54h1.5v-6.54zM485,8.8v6.25h0.7v-6.25zM486.9,8.8v6.36h0.9v-6.36zM490.3,8.8v2.33h0.9v-2.33zM492.4,8.8v6.06h1.5v-6.06zM496.4,8.8v6.58h0.7v-6.58zM497.9,8.8v5.99h1.2v-5.99z" fill="#1b8da4"/></svg>
</div>
<div id="spectrum" class="win" style="left:0;top:0;width:499.7px;height:263.6px;box-shadow:0 0 2.5px rgba(0,0,0,0.6);">
<svg width="500" height="264" viewBox="0 0 500 264">
<rect x="16.6" y="-2" width="446.3" height="166" fill="#1f2126"/>
<path d="M16.8,-2V164M42.7,-2V164M61.07,-2V164M75.33,-2V164M86.97,-2V164M96.82,-2V164M105.34,-2V164M112.87,-2V164M163.87,-2V164M189.77,-2V164M208.14,-2V164M222.4,-2V164M234.04,-2V164M243.89,-2V164M252.41,-2V164M259.94,-2V164M310.94,-2V164M336.84,-2V164M355.21,-2V164M369.47,-2V164M381.11,-2V164M390.96,-2V164M399.48,-2V164M407.01,-2V164M458.01,-2V164M16.6,-1H463M16.6,10.81H463M16.6,22.62H463M16.6,34.43H463M16.6,46.24H463M16.6,58.05H463M16.6,69.86H463M16.6,81.67H463M16.6,93.48H463M16.6,105.29H463M16.6,117.1H463M16.6,128.91H463M16.6,140.72H463M16.6,152.53H463M16.6,164.34H463" stroke="#3b3f47" stroke-width="0.9" fill="none"/>
<path d="M119.6,-2V164M266.67,-2V164M413.74,-2V164" stroke="#5c6069" stroke-width="1" fill="none"/>
<path d="M16.9,-2V164.1" stroke="#5c6069" stroke-width="0.9" fill="none"/>
<polyline points="16.8,28.6 30,28.9 42,28.6 60,27.1 75,26 90,24 105,21.5 119,20.7 128,19.1 135,17.6 142,18.9 150,18.3 164,25.2 178,27.8 190,29 199,27 211.8,24.7 220,30.8 228,32.7 237.7,26 242.6,30.8 246,36.3 251,28.9 255.3,27.4 259.5,32.4 263,45 265.8,50.7 270.7,45.7 275.6,39.4 279,41.4 284,36.8 289.6,45.7 293.2,41.4 297.4,37.3 300.65,37.29 302.69,46.14 305.28,59.92 309.05,55.2 312.45,68.55 315.27,50.86 317.47,54.86 322.22,47.5 326.96,57.99 330.54,67.63 333.95,53.24 336.02,62.83 337.67,59.61 342.66,64.36 347.51,54.37 350.8,57.38 352.88,50.5 354.51,60.89 357.97,55.22 359.73,57.17 364.46,53.97 366.97,59.91 367.93,57.08 370.94,65.39 374.13,57.13 377.01,65.33 378.96,56.1 382.4,68.25 385.56,51.75 387.57,58.15 389.52,59.45 394.3,71.1 394.78,56.24 398.08,67.46 400.6,56.91 402,60.93 404.11,56.8 406.23,62.26 408.34,55.36 409.39,65.25 411.42,57.47 413.21,64.04 415.42,56.72 416.68,62.05 418.06,55.02 420.34,62.18 421.77,56.09 422.85,63.82 424.22,57.32 426.4,64.45 427.69,58 429.42,67.68 430.35,59.93 432.13,65.76 433.87,62.65 435.03,69.5 437.11,63.83 439.11,68.28 441.15,62.58 443.01,71.04 444.61,66.68 445.88,74.12 447.73,68.98 448.77,77.58 451,71.22 452.21,81.13 454.46,76.72 456.4,81.22 456.9,80 457.4,100 457.9,119.5 459,120.6 462.3,120.2" fill="none" stroke="#1d93ab" stroke-width="1.1" stroke-linejoin="round"/>
<polyline points="16.8,29 30,28.6 42,28.3 60,27.5 75,26 90,23.7 105,21.5 119,20.4 128,18.8 135,18 142,18.6 150,19.6 164,23.9 178,27.1 190,29 199,27.6 211.8,25.3 220,29.5 228,32.7 237.7,26 242.6,29.5 246,35 251,29.5 255.3,28 259.5,33 263,45 265.8,49.4 270.7,47 275.6,40.7 279,42 284,36.8 289.6,47 293.2,40.7 297.4,38.6 300,41.5 302.5,45.8 305.5,60.5 309.2,56.2 312.3,67.9 316,54.4 318.4,57.5 322.7,48.9 326.4,58.1 330.7,67.9 333.8,55.6 336.2,67.3 338,59.3 343.6,68.5 347.3,55.6 350.4,61.2 352.8,52.6 355.3,62.4 357.7,54.4 360.2,62.4 364.5,55.6 367,63.6 368.8,56.9 371.9,68.5 374.3,62.4 376.8,66.1 379.2,58.1 382.3,67.9 386,56.2 388.5,64.2 390.3,61.8 393.4,70.4 395.2,60.5 397.7,66.7 400,63 401.2,67.19 403.35,61.4 405.16,66.17 406.1,60.97 407.33,66 409.33,57.59 411.53,65.3 413.56,62.09 415.19,67.97 416.79,58.62 418.09,65.84 419.61,56.91 421.57,69.22 422.49,59.62 424.37,67.27 425.75,60.23 426.96,69.19 428.55,62.04 430.47,68.38 432.09,62.57 433.85,72.69 435.18,63.61 436.44,70.9 437.79,66.18 439.51,74.63 440.51,66.86 441.44,76.1 442.86,69.86 444.53,76.33 445.75,72.52 446.93,81.01 448.88,73 449.84,82.4 451.74,75.08 453.17,80.88 454.9,79.8 456.14,83.98 456.8,86 457.2,120 457.6,154.7 459,157 460,153 461.5,160 462.2,156 462.6,162" fill="none" stroke="#ddcf24" stroke-width="1.1" stroke-linejoin="round"/>
</svg>
<span class="t" style="left:467.4px;top:-6.7px;font-size:9.2px;color:#b9bbbd;">0</span>
<span class="t" style="left:467.4px;top:5.11px;font-size:9.2px;color:#b9bbbd;letter-spacing:-0.4px;">-10</span>
<span class="t" style="left:467.4px;top:16.92px;font-size:9.2px;color:#b9bbbd;letter-spacing:-0.4px;">-20</span>
<span class="t" style="left:467.4px;top:28.73px;font-size:9.2px;color:#b9bbbd;letter-spacing:-0.4px;">-30</span>
<span class="t" style="left:467.4px;top:40.54px;font-size:9.2px;color:#b9bbbd;letter-spacing:-0.4px;">-40</span>
<span class="t" style="left:467.4px;top:52.35px;font-size:9.2px;color:#b9bbbd;letter-spacing:-0.4px;">-50</span>
<span class="t" style="left:467.4px;top:64.16px;font-size:9.2px;color:#b9bbbd;letter-spacing:-0.4px;">-60</span>
<span class="t" style="left:467.4px;top:75.97px;font-size:9.2px;color:#b9bbbd;letter-spacing:-0.4px;">-70</span>
<span class="t" style="left:467.4px;top:87.78px;font-size:9.2px;color:#b9bbbd;letter-spacing:-0.4px;">-80</span>
<span class="t" style="left:467.4px;top:99.59px;font-size:9.2px;color:#b9bbbd;letter-spacing:-0.4px;">-90</span>
<span class="t" style="left:467.4px;top:111.4px;font-size:9.2px;color:#b9bbbd;transform-origin:0 50%;transform:scaleX(0.912);">-100</span>
<span class="t" style="left:467.4px;top:123.21px;font-size:9.2px;color:#b9bbbd;letter-spacing:-0.31px;">-110</span>
<span class="t" style="left:467.4px;top:135.02px;font-size:9.2px;color:#b9bbbd;transform-origin:0 50%;transform:scaleX(0.912);">-120</span>
<span class="t" style="left:467.4px;top:146.83px;font-size:9.2px;color:#b9bbbd;transform-origin:0 50%;transform:scaleX(0.912);">-130</span>
<span class="t" style="left:467.4px;top:158.64px;font-size:9.2px;color:#b9bbbd;transform-origin:0 50%;transform:scaleX(0.912);">-140</span>
<span class="t" style="left:21.3px;top:167.7px;font-size:9.3px;color:#83868b;transform:translateX(-50%);">20</span>
<span class="t" style="left:60.3px;top:167.7px;font-size:9.3px;color:#83868b;transform:translateX(-50%);">40</span>
<span class="t" style="left:87px;top:167.7px;font-size:9.3px;color:#83868b;transform:translateX(-50%);">60</span>
<span class="t" style="left:105px;top:167.7px;font-size:9.3px;color:#83868b;transform:translateX(-50%);">80</span>
<span class="t" style="left:119.7px;top:167.7px;font-size:9.3px;color:#e2e2e2;transform:translateX(-50%);">100</span>
<span class="t" style="left:163.3px;top:167.7px;font-size:9.3px;color:#83868b;transform:translateX(-50%);">200</span>
<span class="t" style="left:207.3px;top:167.7px;font-size:9.3px;color:#83868b;transform:translateX(-50%);">400</span>
<span class="t" style="left:233.5px;top:167.7px;font-size:9.3px;color:#83868b;transform:translateX(-50%);">600</span>
<span class="t" style="left:251.8px;top:167.7px;font-size:9.3px;color:#83868b;transform:translateX(-50%);">800</span>
<span class="t" style="left:266px;top:167.7px;font-size:9.3px;color:#e2e2e2;transform:translateX(-50%);">1k</span>
<span class="t" style="left:310px;top:167.7px;font-size:9.3px;color:#83868b;transform:translateX(-50%);">2k</span>
<span class="t" style="left:353.9px;top:167.7px;font-size:9.3px;color:#83868b;transform:translateX(-50%);">4k</span>
<span class="t" style="left:380px;top:167.7px;font-size:9.3px;color:#83868b;transform:translateX(-50%);">6k</span>
<span class="t" style="left:398.3px;top:167.7px;font-size:9.3px;color:#83868b;transform:translateX(-50%);">8k</span>
<span class="t" style="left:413.2px;top:167.7px;font-size:9.3px;color:#e2e2e2;transform:translateX(-50%);">10k</span>
<span class="t" style="left:456.8px;top:167.7px;font-size:9.3px;color:#83868b;transform:translateX(-50%);">20k</span>
<span class="t" style="left:228.7px;top:183.8px;font-size:8.8px;color:#b0b2b4;transform:translateX(-50%);">L</span>
<span class="t" style="left:346px;top:183.8px;font-size:8.8px;color:#b0b2b4;transform:translateX(-50%);">R</span>
<span class="t" style="left:15.5px;top:198.2px;font-size:9.2px;color:#babcbe;letter-spacing:-0.16px;">Graph Type</span>
<span class="t" style="left:17.5px;top:220.8px;font-size:9.2px;color:#babcbe;transform-origin:0 50%;transform:scaleX(0.939);">FFT Length</span>
<div class="dd" style="left:66px;top:196.7px;width:49.3px;height:14.6px;"></div>
<div class="dd" style="left:66px;top:219.4px;width:49.3px;height:14.6px;"></div>
<span class="t" style="left:69.4px;top:198.2px;font-size:9.2px;color:#d6d6d6;transform-origin:0 50%;transform:scaleX(0.908);">Line</span>
<span class="t" style="left:69.4px;top:220.8px;font-size:9.2px;color:#d6d6d6;letter-spacing:-0.16px;">1024</span>
<div class="arrow" style="left:102.9px;top:202.3px;"></div>
<div class="arrow" style="left:102.9px;top:225px;"></div>
<span class="t" style="left:132px;top:198.4px;font-size:8.6px;color:#9c9ea1;letter-spacing:-0.21px;">Est. Freq.:</span>
<span class="t" style="left:139.6px;top:220.8px;font-size:9.2px;color:#9c9ea1;letter-spacing:-0.03px;">Cursor:</span>
<span class="t" style="left:185.35px;top:198.4px;font-size:9.1px;color:#b8babc;letter-spacing:0.05px;">98.19Hz (G2+3cents)</span>
<span class="t" style="left:303.75px;top:198.4px;font-size:9.1px;color:#b8babc;letter-spacing:0.04px;">196.45Hz (G3+3cents)</span>
<span class="t" style="left:207.5px;top:221px;font-size:9.1px;color:#b8babc;letter-spacing:0.23px;">-154.04dB</span>
<span class="t" style="left:328px;top:221px;font-size:9.1px;color:#b8babc;letter-spacing:0.25px;">-161.05dB</span>
<span class="t" style="left:413px;top:221px;font-size:9.1px;color:#b8babc;letter-spacing:0.16px;">21090.74Hz</span>
<div class="btn" style="left:343.3px;top:240.8px;width:77.8px;height:22.8px;background:#26373c;"></div>
<div class="btn" style="left:421px;top:240.8px;width:78.5px;height:22.8px;background:#1b95ad;"></div>
<span class="t" style="left:371.3px;top:246.4px;font-size:9.2px;color:#eeeeee;transform-origin:0 50%;transform:scaleX(0.935);">Close</span>
<span class="t" style="left:448.8px;top:246.4px;font-size:9.2px;color:#ffffff;letter-spacing:0.05px;">Apply</span>
</div>
<div id="loudness" class="win" style="left:1.4px;top:271.3px;width:470.2px;height:299.7px;">
<div class="titlebar" style="height:16.9px;"></div>
<div class="dot" style="left:6.2px;top:4.5px;width:8px;height:8px;background:#a23e3e;"></div>
<div class="dot" style="left:21.1px;top:4.5px;width:8px;height:8px;background:#a5862b;"></div>
<span class="t" style="left:234.6px;top:2.5px;font-size:9.4px;color:#d0d0d0;transform:translateX(-50%);text-shadow:0 0 0.4px #d0d0d0;">Loudness Meter</span>
<span class="t" style="left:23.1px;top:29.6px;font-size:9.2px;color:#f0f0f0;letter-spacing:-0.28px;text-shadow:0 0 0.5px #f0f0f0;">Presets:</span>
<div class="dd" style="left:63.3px;top:26px;width:99px;height:19px;"></div>
<span class="t" style="left:69.1px;top:29.6px;font-size:9.2px;color:#c0c2c4;letter-spacing:-0.21px;">Last used</span>
<div class="arrow" style="left:149.5px;top:33.9px;"></div>
<div class="btn" style="left:427.5px;top:22.6px;width:26px;height:25.8px;background:#1b95ad;"></div>
<div class="abs" style="left:16.5px;top:52.9px;width:436.9px;height:1.6px;background:#484b50;"></div>
<svg width="471" height="300" viewBox="1.4 271.3 471 300">
<path d="M386.8,302h2.4v3.9h2.1l-3.3,3.1l-3.3,-3.1h2.1z" fill="#d2d3d4"/><path d="M382.75,308.6h3.1l2.15,2.0l2.15,-2.0h3.1v3.5h-10.5z" fill="#d2d3d4"/><rect x="383.7" y="309.9" width="1.2" height="1.0" fill="#33363b"/><path d="M410.65,305.3q0.2,-2.6 2.6,-3.0h3.3q2.4,0.4 2.6,3.0z" fill="#5a5d61"/><path d="M410.9,305.5h8.0l-0.8,5.9q-0.1,0.7 -0.9,0.7h-4.6q-0.8,0 -0.9,-0.7z" fill="#5a5d61"/><path d="M413.1,306.4v4.9M414.9,306.4v4.9M416.7,306.4v4.9" stroke="#33363b" stroke-width="0.55" fill="none"/><path d="M444.65,303.17A4.8,4.8 0 1 1 439.15,303.17" fill="none" stroke="#c6e7ed" stroke-width="1.05"/><path d="M441.9,301.7v5.2" stroke="#bfe6ee" stroke-width="1.2" fill="none"/>
<rect x="15.8" y="360.3" width="211.8" height="212" fill="#26292c"/>
<clipPath id="hc"><rect x="15.8" y="360.3" width="211.8" height="212"/></clipPath>
<g clip-path="url(#hc)">
<polygon points="114.6,470 114.6,440 115.5,425 117,410 120,400 125,394 130,392 227.6,392 227.6,422.6 135,422.6 135,425.8 130,425.8 130,429.6 127,429.6 127,435 124,435 124,444.6 121,444.6 121,454 118,454 118,470 114.6,470" fill="#467a93"/>
<polyline points="116.32,392.81 123.33,392.46 130.35,391.93 142.63,398.95 160.18,404.21 181.23,408.6 195.26,406.84 212.81,405.96 227.72,405.09" fill="none" stroke="#2a9db3" stroke-width="0.8"/>
<polyline points="114.56,427.89 116.32,413.86 118.07,405.09 123.33,394.56 132.11,392.81 136.49,405.09 142.63,419.12 151.4,420.88 160.18,415.61 168.95,413.86 172.46,418.25 179.47,415.61 184.74,410.35 191.75,401.58 198.77,403.33 209.3,404.21 227.72,400.7" fill="none" stroke="#2a9db3" stroke-width="0.8"/>
<polyline points="113.7,571 114.04,386.67 115.44,386.14 117.19,396.32 118.95,394.56 120.7,398.07 122.46,387.02 124.21,392.81 125.96,394.56 127.72,386.67 129.47,396.32 131.23,391.93 132.98,404.21 134.74,407.72 136.49,431.4 138.25,426.14 140.88,411.23 143.51,438.42 146.49,408.6 148.77,442.81 151.75,406.84 155.79,437.54 157.54,417.37 160.18,399.82 161.93,436.67 165.44,397.19 168.95,451.58 172.81,398.95 175.96,427.89 177.72,405.09 180.35,445.44 182.98,417.37 185.96,390.7 188.25,401.58 190.88,395.44 193.51,415.61 197.89,391.05 200.53,401.58 203.16,396.32 206.67,415.26 211.05,396.32 212.81,404.21 215.96,390.7 219.3,412.98 223.33,389.65 225.96,405.96 227.72,396.32" fill="none" stroke="#e9b942" stroke-width="0.9" stroke-linejoin="round"/>
</g>
<path d="M242.1,360.3H247M265.3,360.3H270.3M242.1,388H247M265.3,388H270.3M242.1,415.7H247M265.3,415.7H270.3M242.1,443.4H247M265.3,443.4H270.3M242.1,471.1H247M265.3,471.1H270.3M242.1,498.8H247M265.3,498.8H270.3M242.1,526.5H247M265.3,526.5H270.3M242.1,554.2H247M265.3,554.2H270.3" stroke="#b4b6b8" stroke-width="0.9" fill="none"/>
<rect x="291.6" y="392.9" width="14.4" height="29.2" fill="#47748b"/>
<rect x="320" y="405.3" width="14.3" height="170" fill="#1b89a5"/>
<rect x="348.2" y="401.3" width="14.4" height="170" fill="#46a18f"/>
<rect x="376.6" y="395.3" width="14.4" height="176" fill="#f2c248"/>
<defs><linearGradient id="pg" gradientUnits="userSpaceOnUse" x1="0" y1="361" x2="0" y2="571">
<stop offset="0" stop-color="#f0443a"/><stop offset="0.07" stop-color="#f4653a"/><stop offset="0.16" stop-color="#f89a3c"/>
<stop offset="0.24" stop-color="#f6c840"/><stop offset="0.30" stop-color="#f2ec48"/><stop offset="0.36" stop-color="#e8f44e"/>
<stop offset="0.43" stop-color="#b4da5c"/><stop offset="0.53" stop-color="#7cbc72"/><stop offset="0.64" stop-color="#50a58a"/>
<stop offset="0.72" stop-color="#2a90a0"/><stop offset="0.76" stop-color="#1b89a5"/><stop offset="1" stop-color="#1b89a5"/>
</linearGradient></defs>
<rect x="406.2" y="361.2" width="10.1" height="212" fill="url(#pg)"/>
<rect x="418.2" y="361.2" width="10.2" height="212" fill="url(#pg)"/>
<rect x="406.2" y="360.9" width="10.1" height="0.9" fill="#f2d048"/><rect x="418.2" y="360.9" width="10.2" height="0.9" fill="#f2d048"/>
<rect x="406.2" y="348.2" width="10.1" height="4.2" fill="#f03243"/><rect x="418.2" y="348.2" width="10.2" height="4.2" fill="#f03243"/>
<path d="M430.8,360.3H434M430.8,378.75H434M430.8,397.2H434M430.8,415.65H434M430.8,434.1H434M430.8,452.55H434M430.8,471H434M430.8,489.45H434M430.8,507.9H434M430.8,526.35H434M430.8,544.8H434M430.8,563.25H434" stroke="#b4b6b8" stroke-width="0.9" fill="none"/>
</svg>
<span class="t" style="left:119.6px;top:65.2px;font-size:9.2px;color:#c2c4c6;transform:translateX(-50%);">History (s)</span>
<span class="t" style="left:244.8px;top:65.2px;font-size:9.2px;color:#a6a8ab;transform-origin:0 50%;transform:scaleX(0.816);">LUFS</span>
<span class="t" style="left:288px;top:65.2px;font-size:9.2px;color:#a6a8ab;transform-origin:0 50%;transform:scaleX(0.860);">LRA</span>
<span class="t" style="left:323.9px;top:65.2px;font-size:9.2px;color:#a6a8ab;transform:translateX(-50%);">I</span>
<span class="t" style="left:352px;top:65.2px;font-size:9.2px;color:#a6a8ab;transform:translateX(-50%);">S</span>
<span class="t" style="left:380.4px;top:65.2px;font-size:9.2px;color:#a6a8ab;transform:translateX(-50%);">M</span>
<span class="t" style="left:416px;top:59.1px;font-size:5.6px;color:#a6a8ab;transform:translateX(-50%);">Peak (dB)</span>
<span class="t" style="left:254.4px;top:83.1px;font-size:8.8px;color:#b4b6b8;transform:translateX(-50%);">0</span>
<span class="t" style="left:253.7px;top:110.8px;font-size:8.8px;color:#b4b6b8;transform:translateX(-50%);">-5</span>
<span class="t" style="left:253.7px;top:138.5px;font-size:8.8px;color:#b4b6b8;transform:translateX(-50%);">-10</span>
<span class="t" style="left:253.7px;top:166.2px;font-size:8.8px;color:#b4b6b8;transform:translateX(-50%);">-15</span>
<span class="t" style="left:253.7px;top:193.9px;font-size:8.8px;color:#b4b6b8;transform:translateX(-50%);">-20</span>
<span class="t" style="left:253.7px;top:221.6px;font-size:8.8px;color:#b4b6b8;transform:translateX(-50%);">-25</span>
<span class="t" style="left:253.7px;top:249.3px;font-size:8.8px;color:#b4b6b8;transform:translateX(-50%);">-30</span>
<span class="t" style="left:253.7px;top:277px;font-size:8.8px;color:#b4b6b8;transform:translateX(-50%);">-35</span>
<span class="t" style="left:435.2px;top:83.2px;font-size:8.6px;color:#b4b6b8;">0</span>
<span class="t" style="left:435.2px;top:101.65px;font-size:8.6px;color:#b4b6b8;">-5</span>
<span class="t" style="left:435.2px;top:120.1px;font-size:8.6px;color:#b4b6b8;">-10</span>
<span class="t" style="left:435.2px;top:138.55px;font-size:8.6px;color:#b4b6b8;">-15</span>
<span class="t" style="left:435.2px;top:157px;font-size:8.6px;color:#b4b6b8;">-20</span>
<span class="t" style="left:435.2px;top:175.45px;font-size:8.6px;color:#b4b6b8;">-25</span>
<span class="t" style="left:435.2px;top:193.9px;font-size:8.6px;color:#b4b6b8;">-30</span>
<span class="t" style="left:435.2px;top:212.35px;font-size:8.6px;color:#b4b6b8;">-35</span>
<span class="t" style="left:435.2px;top:230.8px;font-size:8.6px;color:#b4b6b8;">-40</span>
<span class="t" style="left:435.2px;top:249.25px;font-size:8.6px;color:#b4b6b8;">-45</span>
<span class="t" style="left:435.2px;top:267.7px;font-size:8.6px;color:#b4b6b8;">-50</span>
<span class="t" style="left:435.2px;top:286.15px;font-size:8.6px;color:#b4b6b8;">-55</span>
</div>
<div id="phasescope" class="win" style="left:852.4px;top:299.8px;width:286.4px;height:271.2px;box-shadow:0 0 5px rgba(0,0,0,0.55);">
<div class="titlebar" style="height:16.8px;"></div>
<div class="dot" style="left:6.5px;top:4.9px;width:8px;height:8px;background:#9a3d3d;"></div>
<div class="dot" style="left:21.2px;top:4.9px;width:8px;height:8px;background:#9c7f29;"></div>
<span class="t" style="left:142.6px;top:2.9px;font-size:9.4px;color:#cfcfcf;transform:translateX(-50%);text-shadow:0 0 0.4px #cfcfcf;">Phasescope</span>
<span class="t" style="left:23.1px;top:30.1px;font-size:9.2px;color:#f0f0f0;letter-spacing:-0.25px;text-shadow:0 0 0.5px #f0f0f0;">Presets:</span>
<div class="dd" style="left:63.4px;top:26.5px;width:99.2px;height:19.2px;"></div>
<span class="t" style="left:69.2px;top:30.1px;font-size:9.2px;color:#c0c2c4;letter-spacing:-0.19px;">Last used</span>
<div class="arrow" style="left:149.5px;top:34.4px;"></div>
<div class="btn" style="left:243.6px;top:23.4px;width:25.7px;height:25.6px;background:#1b95ad;"></div>
<div class="abs" style="left:16.6px;top:53.5px;width:252.6px;height:1.6px;background:#484b50;"></div>
<svg width="287" height="271" viewBox="852.4 299.8 287 271">
<path d="M1053.5,330.9h2.4v3.9h2.1l-3.3,3.1l-3.3,-3.1h2.1z" fill="#d2d3d4"/><path d="M1049.45,337.5h3.1l2.15,2.0l2.15,-2.0h3.1v3.5h-10.5z" fill="#d2d3d4"/><rect x="1050.4" y="338.8" width="1.2" height="1.0" fill="#33363b"/><path d="M1077.35,334.2q0.2,-2.6 2.6,-3.0h3.3q2.4,0.4 2.6,3.0z" fill="#5a5d61"/><path d="M1077.6,334.4h8.0l-0.8,5.9q-0.1,0.7 -0.9,0.7h-4.6q-0.8,0 -0.9,-0.7z" fill="#5a5d61"/><path d="M1079.8,335.3v4.9M1081.6,335.3v4.9M1083.4,335.3v4.9" stroke="#33363b" stroke-width="0.55" fill="none"/><path d="M1111.55,332.07A4.8,4.8 0 1 1 1106.05,332.07" fill="none" stroke="#c6e7ed" stroke-width="1.05"/><path d="M1108.8,330.6v5.2" stroke="#bfe6ee" stroke-width="1.2" fill="none"/>
<rect x="907" y="383.2" width="176.6" height="176" fill="none" stroke="#232528" stroke-width="1"/>
<path d="M993,405 L995.47,404.2 L994.72,406.88 L992.78,406.27 L994.22,410.14 L994.82,413.44 L996.42,411.95 L995.11,406.3 L989.51,406.3 L989.49,408.71 L991.65,404.2 L989.51,404.2 L994.25,405 L994.77,404.2 L990.09,404.2 L990.35,408.51 L990.75,410.51 L986.65,413.02 L989.33,415.65 L987.64,421.88 L989.74,421.83 L992.15,420.64 L991.95,424.8 L994.02,417.85 L992.04,420.03 L990.44,426.03 L988.21,421.98 L994.04,425.3 L992.38,415.15 L993.01,421.96 L997.57,417.85 L999.36,417.17 L1000.31,417.55 L997.86,419.37 L999.21,413.24 L1004.52,414.35 L1005.16,414.72 L1003.29,412.54 L994.49,414.9 L997.92,419.92 L999.34,429.53 L1000.86,426.96 L1003.2,429.93 L1003.81,433.85 L1003.2,428.06 L995.44,431.73 L991.53,431.9 L996.49,425.67 L1000.24,422.17 L994.21,427.87 L996.42,422.49 L996,428.81 L990.25,433.44 L986,430.62 L987.83,428.53 L986.06,426.41 L980.85,425.32 L982.52,436.71 L988.19,438.71 L985.97,436.45 L982.88,433.95 L992.55,436.65 L988.11,441.86 L992.98,446.77 L994.57,450.53 L996.29,451.29 L994.07,448.51 L992.55,440.36 L990.84,434.56 L986.78,434.15 L985.62,444.28 L992.45,447.68 L995.46,441.62 L996.05,434.98 L993.04,434.84 L991.51,441.48 L989.39,450.82 L987.83,452.96 L982.98,454.49 L989.74,452.7 L989.86,453.29 L990.94,455.15 L993.94,448.34 L997.1,451.68 L1000.05,454.99 L992.8,456.22 L992.45,462.55 L992.64,468.15 L991.53,461.37 L992.85,454.75 L991.34,456.24 L992.68,453.02 L992.5,448.29 L991.26,446.3 L997.79,452.89 L995.79,450.95 L1002.42,451.08 L1001.85,454.47 L998.94,453.32 L997.79,449.2 L996.07,445.9 L996.73,441.74 L992.44,443.18 L991.8,450.71 L997.9,458.17 L998.65,463.89 L996.07,469.14 L989.54,465.3 L987.16,466.32 L985.99,459.34 L985.59,468.59 L989.56,467.04 L986.2,471.7 L988.72,467.98 L988.76,471.93 L987.34,469.64 L987.27,470.24 L987.12,474.22 L990.83,466.88 L989.18,469.46 L988.12,475.88 L987.02,475.28 L990.63,468.39 L996.14,468.13 L993.29,465.76 L988.32,462.32 L994.95,464.79 L993.47,468.5 L995.96,466.22 L994.66,470.4 L998.65,472.98 L1004.18,472.76 L1001.63,467.3 L1000.49,473.42 L998.37,473.36 L994.15,471.9 L992.27,473.32 L996.75,477.47 L999.91,483.56 L997.46,488.69 L997.27,479.87 L994.48,479.54 L990.48,487.59 L990.9,489.75 L986.86,487.62 L988.98,482 L991.57,481.64 L993.46,475.98 L995.81,476.3 L993.21,470.04 L992.56,471.71 L999.52,470.96 L1004.05,480.07 L1004.75,482.53 L1005.25,476.16 L1009.15,477.02 L1004.3,479.17 L996.56,476.93 L992.48,472.84 L994.95,483.77 L994.96,482.12 L996.28,480.56 L996.72,484.72 L995.49,482.92 L997.14,483.97 L999.3,478.03 L994.49,478.4 L996.38,475 L1000.47,485.07 L996.95,491.15 L990.04,489.84 L985.28,493.93 L989.85,494.76 L988.33,487.62 L990.85,485.4 L993.76,479.52 L995.65,485.16 L989.47,482.32 L987.4,481.68 L989.35,484.3 L985.46,485.11 L992.75,483.95 L994.97,483.2 L990.04,481.31 L989.55,475.97 L992.51,479.71 L989.48,483.61 L991.75,492.07 L998.54,491.88 L1000.76,494.8 L995.59,500.96 L993.41,499.92 L991.06,497.34 L996.79,498.28 L1002.96,497.08 L1001.93,493.75 L996.33,492 L996.66,488.15 L1003.38,493.67 L1001.92,502.08 L995.22,502.4 L994.39,503.18 L990.81,504.01 L992.71,497.55 L991.42,493.78 L991.92,492.12 L997.86,488.08 L1004.31,492.7 L1004.28,487.82 L1007.9,496 L1007.08,490.79 L1005.32,491.78 L1006.24,493.31 L1003.52,501.46 L995.44,500.45 L992.28,496.24 L987.84,492.19 L990.52,500.04 L988.69,503.88 L990.95,505.78 L990.28,509.2 L995.29,510.89 L991.48,516.64 L993.54,506.97 L996.02,503.87 L1000.14,509.37 L1000.77,518.24 L994.16,519.3 L994.86,518.9 L991.45,511.13 L992.38,519.73 L998.97,515.9 L999,513.46 L998.07,505.58 L997.65,503.25 L992.92,504.5 L994.99,505.43 L993.26,510.97 L994.78,509.53 L997.4,512.26 L1000.44,516.61 L1002.2,513.36 L999.96,518.3 L994.54,515.09 L994.46,517.87 L998.54,512.58 L1002.81,510.68 L1000.93,518.41 L1001.05,512.21 L999.65,507.7 L1001.15,507.26 L999.46,510.27 L994.15,514.9 L999.84,513.82 L997.16,517.98 L1000.78,516.23 L1000.61,520.68 L998.35,518.76 L1002.39,520.9 L1001.56,516.4 L1000.48,524.84 L1001.8,530.91 L996.06,533.24 L998.09,534.41 L997,534.6 L993.52,538.09 L996.7,542.63 L997.22,543.01 L995.5,538.02 L996.4,539.24 L997.53,540.79 L998.62,538.76 L996.06,537.82 L996.06,536.6 L993.04,541.75 L997.14,541.96 L995.51,545.57 L994.82,543.08 L997,540.71 L997.24,539.36 L998.88,542.28 L1000.37,544.58 L1000.46,546.47 L998.85,543.01 L993.57,544.06 L995.77,545.83 L995.53,545.59 L994.02,546.73 L997.63,547.97 L996.01,553.11 L999.19,554 L994.81,552.45 L997.42,548.47 L998.08,547.35 L997.41,552.41 L996.2,551.39 L995.93,552.71 L996.07,552.58 L995.97,559.18 L995.27,560.3 L995.2,560.3" fill="none" stroke="#27a4be" stroke-width="0.8" stroke-linejoin="round"/>
</svg>
<span class="t" style="left:142.6px;top:62.7px;font-size:9.2px;color:#b0b2b4;transform:translateX(-50%);">Goniometer</span>
<div class="dd" style="left:182.4px;top:264.4px;width:49.2px;height:12px;"></div>
<span class="t" style="left:185.2px;top:265.5px;font-size:9.3px;color:#d0d0d0;">Line</span>
<div class="arrow" style="left:218.5px;top:268.5px;"></div>
</div>
<div class="abs" style="left:0;top:0;width:1.4px;height:570px;background:#1d1f22;"></div>
</body>
</html>
